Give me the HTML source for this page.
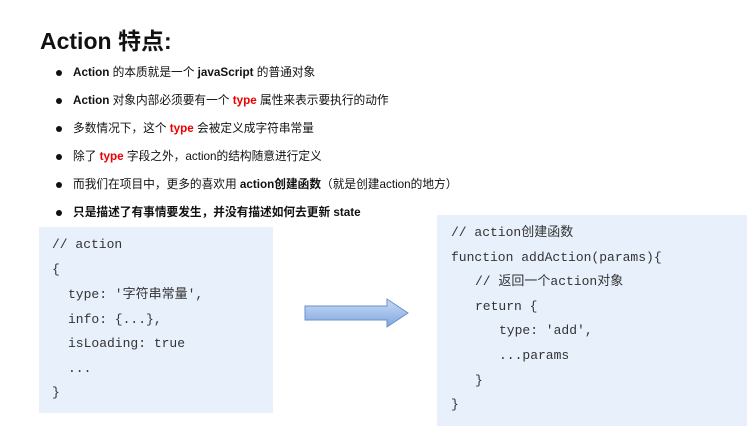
<!DOCTYPE html>
<html><head><meta charset="utf-8"><style>
body{margin:0;width:747px;height:426px;background:#fff;position:relative;overflow:hidden;font-family:"Liberation Sans","Noto Sans CJK SC",sans-serif;color:#111}
.t{position:absolute;left:40px;top:22px;font-size:23px;font-weight:bold}
.b{position:absolute;left:73px;font-size:11.7px;line-height:14px;white-space:nowrap}
.b:before{content:"";position:absolute;left:-17px;top:4px;width:6px;height:6px;border-radius:50%;background:#111}
.r{color:#e00;font-weight:bold}
.box{position:absolute;background:#e8f0fc}
.c{position:absolute;font-family:"Liberation Mono","Noto Sans CJK SC",monospace;font-size:13px;color:#333;white-space:pre;line-height:14px}
</style></head><body>
<div class="t">Action 特点:</div>
<div class="b" style="top:66px"><b>Action</b> 的本质就是一个 <b>javaScript</b> 的普通对象</div>
<div class="b" style="top:94px"><b>Action</b> 对象内部必须要有一个 <span class="r">type</span> 属性来表示要执行的动作</div>
<div class="b" style="top:122px">多数情况下，这个 <span class="r">type</span> 会被定义成字符串常量</div>
<div class="b" style="top:150px">除了 <span class="r">type</span> 字段之外，action的结构随意进行定义</div>
<div class="b" style="top:178px">而我们在项目中，更多的喜欢用 <b>action创建函数</b>（就是创建action的地方）</div>
<div class="b" style="top:206px"><b>只是描述了有事情要发生，并没有描述如何去更新 state</b></div>
<div class="box" style="left:39px;top:227px;width:234px;height:186px"></div>
<div class="c" style="left:52px;top:238px">// action</div>
<div class="c" style="left:52px;top:263px">{</div>
<div class="c" style="left:68px;top:288px">type: '字符串常量',</div>
<div class="c" style="left:68px;top:313px">info: {...},</div>
<div class="c" style="left:68px;top:337px">isLoading: true</div>
<div class="c" style="left:68px;top:362px">...</div>
<div class="c" style="left:52px;top:386px">}</div>
<svg style="position:absolute;left:303px;top:297px" width="108" height="32"><defs><linearGradient id="g" x1="0" y1="0" x2="0" y2="1"><stop offset="0" stop-color="#c9dbf5"/><stop offset="1" stop-color="#7fa7e0"/></linearGradient></defs><path d="M2 9H84V2L105 16L84 30V23H2Z" fill="url(#g)" stroke="#6d8fc8" stroke-width="1"/></svg>
<div class="box" style="left:437px;top:215px;width:310px;height:211px"></div>
<div class="c" style="left:451px;top:226px">// action创建函数</div>
<div class="c" style="left:451px;top:251px">function addAction(params){</div>
<div class="c" style="left:475px;top:275px">// 返回一个action对象</div>
<div class="c" style="left:475px;top:300px">return {</div>
<div class="c" style="left:499px;top:324px">type: 'add',</div>
<div class="c" style="left:499px;top:349px">...params</div>
<div class="c" style="left:475px;top:374px">}</div>
<div class="c" style="left:451px;top:398px">}</div>
</body></html>
